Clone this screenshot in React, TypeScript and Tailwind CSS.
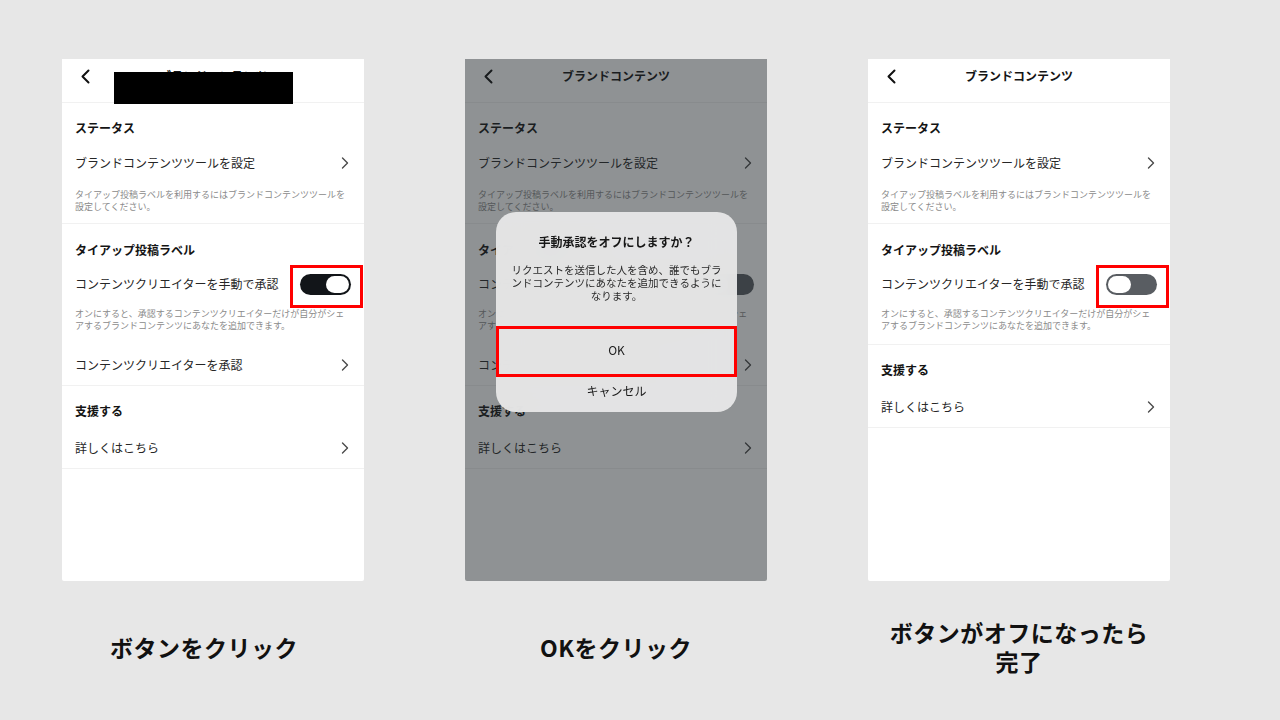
import React from "react";

function ChevronRight() {
  return (
    <svg width="8" height="12" viewBox="0 0 8 12" fill="none">
      <path d="M1.5 1l5 5-5 5" stroke="#4a4a4a" strokeWidth="1.4" strokeLinecap="round" strokeLinejoin="round" />
    </svg>
  );
}

function BackChevron() {
  return (
    <svg width="11" height="15" viewBox="0 0 11 15" fill="none">
      <path d="M8.5 1.5L2.5 7.5l6 6" stroke="#111" strokeWidth="2" strokeLinecap="round" strokeLinejoin="round" />
    </svg>
  );
}

function Toggle({ on, box }: { on: boolean; box: boolean }) {
  return (
    <div className="relative">
      <div
        className={
          on
            ? "w-[51px] h-[21px] rounded-full bg-[#121519] flex items-center justify-end px-[2px]"
            : "w-[51px] h-[21px] rounded-full bg-[#595d62] flex items-center justify-start px-[2px]"
        }
      >
        <div className="w-[23px] h-[17px] rounded-full bg-white" />
      </div>
      {box && <div className="absolute left-[-10px] top-[-9px] w-[73px] h-[43px] border-[3px] border-[#ff0000]" />}
    </div>
  );
}

function SectionHeader({ children }: { children: React.ReactNode }) {
  return <div className="px-[13px] text-[12px] leading-[16px] font-bold text-[#141414]">{children}</div>;
}

function NavRow({ children, className }: { children: React.ReactNode; className?: string }) {
  return (
    <div className={"h-[40px] flex items-center justify-between pl-[13px] pr-[15px] " + (className || "")}>
      <span className="text-[12px] leading-[16px] text-[#262626]">{children}</span>
      <ChevronRight />
    </div>
  );
}

function Desc({ children, className }: { children: React.ReactNode; className?: string }) {
  return <div className={"px-[13px] text-[9px] leading-[12px] text-[#8a8a8a] " + (className || "")}>{children}</div>;
}

function Phone({
  redacted,
  toggleOn,
  showApprove,
  redBox,
  dialog,
}: {
  redacted?: boolean;
  toggleOn: boolean;
  showApprove: boolean;
  redBox: boolean;
  dialog?: boolean;
}) {
  return (
    <div className="relative w-[302px] h-[522px] bg-white overflow-hidden rounded-b-[2px]">
      {/* header */}
      <div className="relative h-[44px] border-b border-[#f1f1f1] flex items-start pt-[9px]">
        <div className="absolute left-[18px] top-[10px]">
          <BackChevron />
        </div>
        <div className="w-full text-center text-[12px] leading-[16px] font-semibold text-[#141414]">ブランドコンテンツ</div>
      </div>
      {redacted && <div className="absolute left-[52px] top-[13px] w-[179px] h-[32px] bg-black" />}

      {/* section 1 */}
      <div className="border-b border-[#f1f1f1] pb-[10px]">
        <div className="pt-[17px]">
          <SectionHeader>ステータス</SectionHeader>
        </div>
        <NavRow className="mt-[7px]">ブランドコンテンツツールを設定</NavRow>
        <Desc className="pt-[6px]">
          タイアップ投稿ラベルを利用するにはブランドコンテンツツールを
          <br />
          設定してください。
        </Desc>
      </div>

      {/* section 2 */}
      <div className="border-b border-[#f1f1f1]">
        <div className="pt-[18px]">
          <SectionHeader>タイアップ投稿ラベル</SectionHeader>
        </div>
        <div className="mt-[8px] h-[36px] flex items-center justify-between pl-[13px] pr-[13px]">
          <span className="text-[12px] leading-[16px] text-[#262626]">コンテンツクリエイターを手動で承認</span>
          <Toggle on={toggleOn} box={redBox} />
        </div>
        <Desc className={"pt-[6px] " + (showApprove ? "" : "pb-[12px]")}>
          オンにすると、承認するコンテンツクリエイターだけが自分がシェ
          <br />
          アするブランドコンテンツにあなたを追加できます。
        </Desc>
        {showApprove && <NavRow className="mt-[13px]">コンテンツクリエイターを承認</NavRow>}
      </div>

      {/* section 3 */}
      <div className="border-b border-[#f1f1f1]">
        <div className="pt-[17px]">
          <SectionHeader>支援する</SectionHeader>
        </div>
        <NavRow className="mt-[9px]">詳しくはこちら</NavRow>
      </div>

      {dialog && (
        <>
          <div className="absolute inset-0 bg-[rgba(31,37,41,0.5)]" />
          <div className="absolute left-[31px] top-[153px] w-[241px] h-[200px] rounded-[20px] bg-[#e8e8e8]/95 backdrop-blur-md flex flex-col items-center pt-[22px]">
            <div className="text-[12px] leading-[16px] font-bold text-[#161616]">手動承認をオフにしますか？</div>
            <div className="mt-[13px] text-[10.5px] leading-[13px] text-[#2a2a2a] text-center">
              リクエストを送信した人を含め、誰でもブラ
              <br />
              ンドコンテンツにあなたを追加できるように
              <br />
              なります。
            </div>
            <div className="relative mt-[24px] w-full h-[51px] flex items-center justify-center pb-[3px]">
              <span className="text-[12px] leading-[16px] text-[#1a1a1a]">OK</span>
              <div className="absolute inset-0 border-[3px] border-[#ff0000]" />
            </div>
            <div className="w-full h-[28px] flex items-center justify-center">
              <span className="text-[12px] leading-[16px] text-[#1a1a1a]">キャンセル</span>
            </div>
          </div>
        </>
      )}
    </div>
  );
}

function Caption({ children, className }: { children: React.ReactNode; className?: string }) {
  return (
    <div className={"h-[132px] flex items-center justify-center text-center " + (className || "")}>
      <div className="text-[23px] leading-[29px] font-bold text-[#111] tracking-[0.5px]">{children}</div>
    </div>
  );
}

export default function App() {
  return (
    <div className="w-[1280px] h-[720px] bg-[#e7e7e7] font-['Noto_Sans_CJK_JP','Noto_Sans',sans-serif] overflow-hidden">
      <div className="flex gap-[101px] pl-[62px] pt-[59px]">
        <div className="w-[302px] flex flex-col">
          <Phone redacted toggleOn showApprove redBox />
          <Caption className="pr-[18px]">ボタンをクリック</Caption>
        </div>
        <div className="w-[302px] flex flex-col">
          <Phone toggleOn={false} showApprove redBox={false} dialog />
          <Caption>OKをクリック</Caption>
        </div>
        <div className="w-[302px] flex flex-col">
          <Phone toggleOn={false} showApprove={false} redBox />
          <Caption>
            ボタンがオフになったら
            <br />
            完了
          </Caption>
        </div>
      </div>
    </div>
  );
}
